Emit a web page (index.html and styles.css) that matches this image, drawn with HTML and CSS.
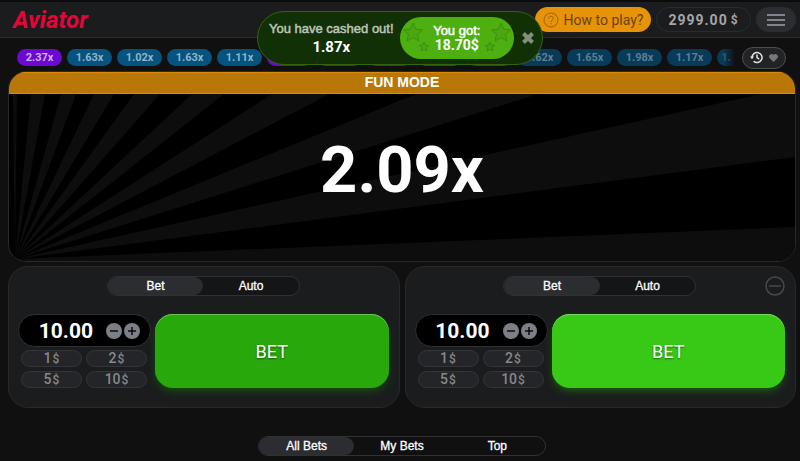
FILE: index.html
```html
<!DOCTYPE html>
<html lang="en">
<head>
    <meta charset="UTF-8">
    <meta name="viewport" content="width=device-width, initial-scale=1.0">
    <title>Aviator</title>
    <link rel="stylesheet" href="styles.css">
</head>
<body>
    <header class="header">
        <a class="logo" href="#">Aviator</a>
        <div class="header-right">
            <button type="button" class="how-to">
                <svg width="16" height="16" viewBox="0 0 16 16" fill="none" stroke="#a45f06">
                    <circle cx="8" cy="8" r="7"/>
                    <path d="M5.8 6.5a2.2 2.2 0 1 1 3.4 1.8c-.8.5-1.2.8-1.2 1.7M8 11v1.3"/>
                </svg>
                How to play?
            </button>
            <div class="balance">2999.00 <span class="currency">$</span></div>
            <button type="button" class="menu" aria-label="Menu">
                <svg width="18" height="14" viewBox="0 0 18 14" stroke="#80858d" stroke-width="2">
                    <path d="M0 2h18M0 7h18M0 12h18"/>
                </svg>
            </button>
        </div>
    </header>

    <div class="toast">
        <div class="toast-text">
            <div class="toast-title">You have cashed out!</div>
            <div class="toast-value">1.87x</div>
        </div>
        <div class="win">
            <svg class="stars" width="26" height="32" viewBox="0 0 26 32">
                <path d="M10 1l2.800 6.200 6.700.700-5 4.500 1.400 6.600-5.900-3.400L4.100 19l1.400-6.600-5-4.500 6.700-.700z"/>
                <path d="M21 20l1.400 3.100 3.300.3-2.500 2.200.8 3.300-3-1.700-3 1.700.8-3.300-2.500-2.200 3.300-.3z"/>
            </svg>
            <div class="win-text">
                <div class="win-title">You got:</div>
                <div class="win-value">18.70<span>$</span></div>
            </div>
            <svg class="stars stars-right" width="26" height="32" viewBox="0 0 26 32">
                <path d="M10 1l2.800 6.200 6.700.700-5 4.500 1.400 6.600-5.900-3.400L4.100 19l1.400-6.600-5-4.500 6.700-.700z"/>
                <path d="M21 20l1.400 3.100 3.300.3-2.500 2.200.8 3.300-3-1.700-3 1.700.8-3.300-2.500-2.200 3.300-.3z"/>
            </svg>
        </div>
        <button type="button" class="toast-close" aria-label="Close">
            <svg width="12" height="12" viewBox="0 0 12 12" stroke="#82907e" stroke-width="4">
                <path d="M1.500 1.500l9 9M10.500 1.500l-9 9"/>
            </svg>
        </button>
    </div>

    <main class="game">
        <div class="history">
            <div class="rounds">
                <span class="round high">2.37x</span>
                <span class="round">1.63x</span>
                <span class="round">1.02x</span>
                <span class="round">1.63x</span>
                <span class="round">1.11x</span>
                <span class="round high"></span>
                <span class="round high"></span>
                <span class="round high"></span>
                <span class="round"></span>
                <span class="round"></span>
                <span class="round old">1.62x</span>
                <span class="round old">1.65x</span>
                <span class="round old">1.98x</span>
                <span class="round old">1.17x</span>
                <span class="round old last">1.</span>
            </div>
            <button type="button" class="history-toggle" aria-label="Round history">
                <svg width="13" height="13" viewBox="0 0 13 13" fill="none" stroke="#e4e4e5" stroke-width="1.500">
                    <path d="M2 6.500a5 5 0 1 1 1.600 3.700M7 3.500v3.200l2.300 1.400"/>
                    <path d="M0 5.500h4L2 8.200z" fill="#e4e4e5" stroke="none"/>
                </svg>
                <svg width="9" height="8" viewBox="0 0 9 8" fill="#77787b">
                    <path d="M4.500 8L.7 4.200A2.300 2.300 0 0 1 4.500 1a2.300 2.300 0 0 1 3.800 3.200z"/>
                </svg>
            </button>
        </div>

        <section class="stage">
            <div class="fun-mode">FUN MODE</div>
            <div class="sky">
                <svg class="rays" viewBox="0 0 786 167" preserveAspectRatio="none" fill="#0d0d0d">
                    <path d="M6 165L4 0H8z"/>
                    <path d="M6 165L22 0H36z"/>
                    <path d="M6 165L52 0H67z"/>
                    <path d="M6 165L85 0H105z"/>
                    <path d="M6 165L125 0H151z"/>
                    <path d="M6 165L183 0H215z"/>
                    <path d="M6 165L263 0H320z"/>
                    <path d="M6 165L407 0H529z"/>
                    <path d="M6 165L752 0H786V63z"/>
                    <path d="M6 165L786 133V167H6z"/>
                </svg>
                <div class="multiplier">2.09x</div>
            </div>
        </section>

        <div class="bets">
            <form class="panel">
                <div class="panel-top">
                    <div class="tabs">
                        <button type="button" class="tab active">Bet</button>
                        <button type="button" class="tab">Auto</button>
                    </div>
                </div>
                <div class="panel-body">
                    <div class="stake">
                        <div class="amount">
                            <input type="text" class="amount-input" value="10.00" aria-label="Bet amount">
                            <button type="button" class="step" aria-label="Less">
                                <svg width="16" height="16" viewBox="0 0 16 16"><circle cx="8" cy="8" r="8" fill="#7d7f87"/><path d="M4 8h8" stroke="#0b0b0c" stroke-width="1.500"/></svg>
                            </button>
                            <button type="button" class="step" aria-label="More">
                                <svg width="16" height="16" viewBox="0 0 16 16"><circle cx="8" cy="8" r="8" fill="#7d7f87"/><path d="M4 8h8M8 4v8" stroke="#0b0b0c" stroke-width="1.500"/></svg>
                            </button>
                        </div>
                        <div class="presets">
                            <button type="button" class="preset">1<span>$</span></button>
                            <button type="button" class="preset">2<span>$</span></button>
                            <button type="button" class="preset">5<span>$</span></button>
                            <button type="button" class="preset">10<span>$</span></button>
                        </div>
                    </div>
                    <button type="button" class="bet pressed">BET</button>
                </div>
            </form>

            <form class="panel">
                <div class="panel-top">
                    <div class="tabs">
                        <button type="button" class="tab active">Bet</button>
                        <button type="button" class="tab">Auto</button>
                    </div>
                    <button type="button" class="remove" aria-label="Remove panel">
                        <svg width="20" height="20" viewBox="0 0 20 20" fill="none" stroke="#47484b" stroke-width="1.500"><circle cx="10" cy="10" r="9"/><path d="M4 10h12"/></svg>
                    </button>
                </div>
                <div class="panel-body">
                    <div class="stake">
                        <div class="amount">
                            <input type="text" class="amount-input" value="10.00" aria-label="Bet amount">
                            <button type="button" class="step" aria-label="Less">
                                <svg width="16" height="16" viewBox="0 0 16 16"><circle cx="8" cy="8" r="8" fill="#7d7f87"/><path d="M4 8h8" stroke="#0b0b0c" stroke-width="1.500"/></svg>
                            </button>
                            <button type="button" class="step" aria-label="More">
                                <svg width="16" height="16" viewBox="0 0 16 16"><circle cx="8" cy="8" r="8" fill="#7d7f87"/><path d="M4 8h8M8 4v8" stroke="#0b0b0c" stroke-width="1.500"/></svg>
                            </button>
                        </div>
                        <div class="presets">
                            <button type="button" class="preset">1<span>$</span></button>
                            <button type="button" class="preset">2<span>$</span></button>
                            <button type="button" class="preset">5<span>$</span></button>
                            <button type="button" class="preset">10<span>$</span></button>
                        </div>
                    </div>
                    <button type="button" class="bet">BET</button>
                </div>
            </form>
        </div>

        <nav class="tabs bets-tabs">
            <button type="button" class="tab active">All Bets</button>
            <button type="button" class="tab">My Bets</button>
            <button type="button" class="tab">Top</button>
        </nav>
    </main>
</body>
</html>
```
FILE: styles.css
```css
* {
    box-sizing: border-box;
}

body {
    margin: 0;
    background-color: #101011;
    color: #ffffff;
    font-family: Roboto, "Liberation Sans", sans-serif;
}

button {
    margin: 0;
    padding: 0;
    border: none;
    background: none;
    color: inherit;
    font-family: inherit;
    cursor: pointer;
}

svg {
    display: block;
    flex: none;
}

.header {
    display: flex;
    align-items: center;
    justify-content: space-between;
    height: 38px;
    padding: 0 4px 0 13px;
    background-color: #1b1c1e;
    border-top: 2px solid #0b0b0c;
    border-bottom: 1px solid #2a2b2e;
}

.logo {
    color: #e50539;
    font-size: 24px;
    font-style: italic;
    font-weight: bold;
    text-decoration: none;
}

.header-right {
    display: flex;
    align-items: center;
    gap: 5px;
}

.how-to {
    display: flex;
    align-items: center;
    justify-content: center;
    gap: 5px;
    width: 116px;
    height: 25px;
    border-radius: 13px;
    background-color: #e69308;
    color: #6b410b;
    font-size: 14px;
    white-space: nowrap;
}

.balance {
    display: flex;
    align-items: center;
    justify-content: center;
    gap: 3px;
    width: 95px;
    height: 25px;
    border: 1px solid #2a2b2e;
    border-radius: 13px;
    color: #a5a6a8;
    font-size: 14px;
    font-weight: bold;
    letter-spacing: 1px;
}

.currency {
    font-size: 12px;
}

.menu {
    display: flex;
    align-items: center;
    justify-content: center;
    width: 40px;
    height: 25px;
    border-radius: 13px;
    background-color: #2c2d31;
}

/* cash out message, lies over the header and the history */
.toast {
    position: absolute;
    top: 11px;
    left: 50%;
    z-index: 2;
    display: flex;
    align-items: center;
    justify-content: space-between;
    width: 286px;
    height: 54px;
    padding: 0 6px 0 11px;
    transform: translateX(-50%);
    border: 1px solid #32640d;
    border-radius: 27px;
    background-color: #123005;
    text-align: center;
}

.toast-title {
    color: #bcc5b9;
    font: 13px/18px "Liberation Sans", sans-serif;
    -webkit-text-stroke: 0.5px #bcc5b9;
    white-space: nowrap;
}

.toast-value {
    font-size: 15px;
    font-weight: bold;
    line-height: 18px;
}

.win {
    display: flex;
    align-items: center;
    justify-content: space-between;
    width: 114px;
    height: 42px;
    padding: 0 3px;
    border-radius: 21px;
    background-color: #4eaf11;
}

.stars {
    fill: #4ba611;
    stroke: #3c8f12;
}

.stars-right {
    transform: scaleX(-1);
}

.win-title {
    font: 13px/14px "Liberation Sans", sans-serif;
    -webkit-text-stroke: 0.5px #ffffff;
    white-space: nowrap;
}

.win-value {
    font-size: 14px;
    font-weight: bold;
    line-height: 14px;
}

.toast-close {
    padding: 2px;
}

.game {
    padding: 0 4px 4px 8px;
}

.history {
    display: flex;
    align-items: center;
    gap: 7px;
    height: 33px;
    padding: 6px 10px 0 9px;
}

.rounds {
    display: flex;
    flex: 1;
    gap: 5px;
    min-width: 0;
    overflow: hidden;
}

.round {
    flex: none;
    width: 45px;
    height: 17px;
    border-radius: 9px;
    background-color: #05537f;
    color: #90b4c8;
    font-size: 11px;
    font-weight: bold;
    line-height: 17px;
    text-align: center;
}

.round.high {
    background-color: #6d07d2;
    color: #cfb0ef;
}

.round.old {
    background-color: #083b59;
    color: #5c7f94;
}

.round.last {
    flex: 1;
    min-width: 0;
    border-radius: 9px 0 0 9px;
    background: linear-gradient(to right, #083b59 6px, #101011);
    color: #3d5666;
}

.history-toggle {
    display: flex;
    align-items: center;
    justify-content: center;
    gap: 6px;
    width: 44px;
    height: 22px;
    border: 1px solid #4c4d50;
    border-radius: 11px;
    background-color: #222325;
}

.stage {
    overflow: hidden;
    border: 1px solid #29292a;
    border-radius: 18px;
    background-color: #000000;
}

.fun-mode {
    height: 22px;
    border-bottom: 1px solid #dc8b05;
    box-shadow: inset 0 1px #dc8b05;
    background-color: #b97708;
    font: bold 14px/21px "Liberation Sans", sans-serif;
    text-align: center;
}

.sky {
    display: grid;
    height: 167px;
}

.rays,
.multiplier {
    grid-area: 1 / 1;
}

.rays {
    width: 100%;
    height: 167px;
}

.multiplier {
    place-self: center;
    padding-bottom: 16px;
    font-size: 65px;
    font-weight: bold;
    line-height: 64px;
}

.bets {
    display: grid;
    grid-template-columns: 1fr 1fr;
    gap: 5px;
    margin-top: 4px;
}

.panel {
    padding: 9px 10px 19px 9px;
    border: 1px solid #29292c;
    border-radius: 20px;
    background-color: #1b1c1e;
}

.panel-top {
    display: grid;
    grid-template-columns: 1fr 193px 1fr;
    align-items: center;
    height: 20px;
}

.panel-top .tabs {
    grid-column: 2;
}

.tabs {
    display: flex;
    height: 20px;
    border: 1px solid #303134;
    border-radius: 10px;
    background-color: #141516;
}

.tab {
    flex: 1;
    border-radius: 9px;
    font-family: "Liberation Sans", sans-serif;
    font-size: 12px;
    line-height: 16px;
    -webkit-text-stroke: 0.3px #ffffff;
}

.tab.active {
    background-color: #2c2d30;
}

.remove {
    justify-self: end;
}

.panel-body {
    display: flex;
    gap: 4px;
    margin-top: 18px;
}

.stake {
    width: 133px;
}

.amount {
    display: flex;
    align-items: center;
    gap: 2px;
    height: 33px;
    padding-right: 10px;
    border: 1px solid #303134;
    border-radius: 17px;
    background-color: #000000;
}

.amount-input {
    flex: 1;
    min-width: 0;
    padding: 0 11px 0 0;
    border: none;
    outline: none;
    background: none;
    color: #ffffff;
    font-family: inherit;
    font-size: 21px;
    font-weight: bold;
    text-align: right;
}

.presets {
    display: grid;
    grid-template-columns: 1fr 1fr;
    gap: 4px;
    padding: 3px 4px 0 3px;
}

.preset {
    height: 17px;
    border: 1px solid #343538;
    border-radius: 9px;
    background-color: #242528;
    color: #87888b;
    font-size: 14px;
    font-weight: 500;
    line-height: 15px;
}

.preset span {
    margin-left: 1px;
    font-size: 12px;
}

.bet {
    flex: 1;
    height: 74px;
    border-radius: 18px;
    background-color: #38c916;
    box-shadow: inset 0 1px #75d95e, 0 4px 10px -2px #1c6b10;
    font-size: 18px;
    text-shadow: 0 1px 2px rgba(0, 0, 0, 0.5);
}

.bet.pressed {
    background-color: #29a80c;
    box-shadow: inset 0 1px #6cc257, 0 4px 10px -2px #185a0d;
}

.bets-tabs {
    width: 288px;
    margin: 28px auto 0;
    background-color: #101011;
}
```
